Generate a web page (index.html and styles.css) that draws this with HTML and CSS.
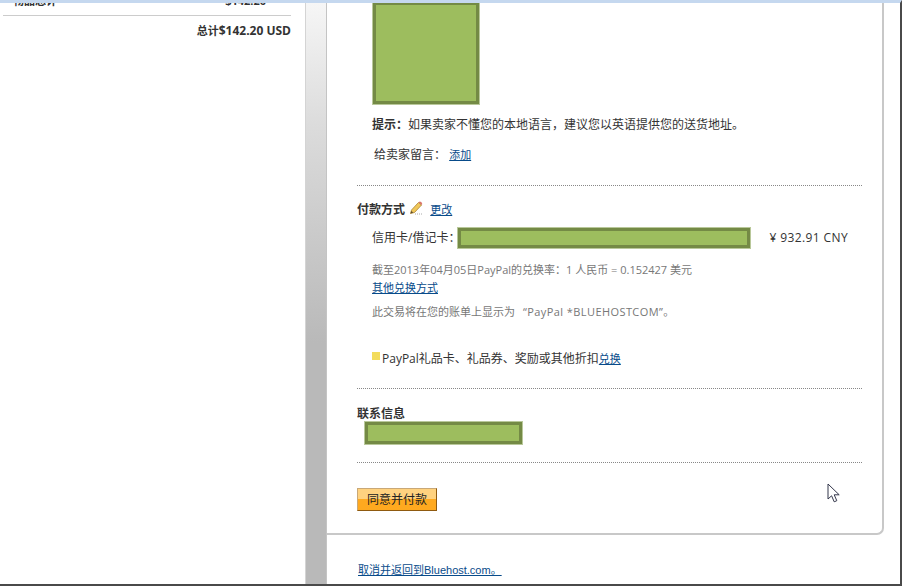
FILE: index.html
```html
<!DOCTYPE html>
<html lang="zh">
<head>
<meta charset="utf-8">
<title>PayPal</title>
<link rel="stylesheet" href="styles.css">
</head>
<body>
<div class="window">
  <aside class="summary">
    <div class="subtotal"><span>物品总计</span><span>$142.20</span></div>
    <div class="total">总计<span class="total-value">$142.20 USD</span></div>
  </aside>
  <div class="gutter"></div>
  <main class="main">
    <section class="card">
      <div class="mask mask-photo"></div>
      <p class="hint"><b>提示<span class="mid">：</span></b>如果卖家不懂您的本地语言<span class="mid">，</span>建议您以英语提供您的送货地址。</p>
      <p class="note">给卖家留言<span class="mid">：</span> <a href="#">添加</a></p>
      <hr class="rule rule-pay">
      <h2 class="heading">付款方式
        <svg class="pencil" width="14" height="14" viewBox="0 0 14 14" aria-hidden="true">
          <path d="M1.5 12.5l1-3.5 7-7.5 3 2.5-7 7.5z" fill="#f0c75a" stroke="#a9822d" stroke-width=".8"/>
          <path d="M9.5 1.5l3 2.5 .8-1-1-2-1.6-.4z" fill="#d9756a"/>
          <path d="M1.5 12.5l.8-2.6 2 1.6z" fill="#5a4a30"/>
          <path d="M6 13h8" stroke="#aaa" stroke-width="1" stroke-dasharray="1 1"/>
        </svg>
        <a class="change" href="#">更改</a></h2>
      <div class="pay-row">
        <span>信用卡/借记卡<span class="mid">：</span></span>
        <div class="mask mask-card"></div>
        <span class="amount">¥ 932.91 CNY</span>
      </div>
      <p class="small rate">截至2013年04月05日PayPal的兑换率<span class="mid">：</span>1 人民币 = 0.152427 美元</p>
      <p class="small other"><a href="#">其他兑换方式</a></p>
      <p class="small descriptor">此交易将在您的账单上显示为<span class="quoted">“PayPal *BLUEHOSTCOM”</span>。</p>
      <p class="gift"><span class="swatch"></span>PayPal礼品卡、礼品券、奖励或其他折扣<a href="#">兑换</a></p>
      <hr class="rule rule-contact">
      <h2 class="heading contact">联系信息</h2>
      <div class="mask mask-contact"></div>
      <hr class="rule rule-submit">
      <button class="submit" type="button">同意并付款</button>
    </section>
    <a class="cancel" href="#">取消并返回到Bluehost.com。</a>
  </main>
  <svg class="cursor" width="14" height="21" viewBox="0 0 14 21" aria-hidden="true">
    <path d="M1 1v15l3.6-3.2 2.6 6 2.6-1.1-2.6-5.9h5z" fill="#fff" stroke="#33364a" stroke-width="1"/>
  </svg>
</div>
</body>
</html>
```

FILE: styles.css
```css
* { box-sizing: border-box; }
html, body { margin: 0; padding: 0; background: #fff; }
body {
  width: 904px;
  height: 588px;
  overflow: hidden;
  font-family: "Open Sans", "Noto Sans CJK SC", sans-serif;
  font-size: 12px;
  color: #333;
}
a { color: #084b8a; text-decoration: underline; }
p { margin: 0; }
.mid { font-family: "Noto Sans CJK TC", sans-serif; line-height: 0; }

.window {
  position: relative;
  display: flex;
  width: 902px;
  height: 586px;
  overflow: hidden;
  border-top: 3px solid #c5d8ef;
  border-right: 2px solid #4a4a4a;
  border-bottom: 2px solid #4a4a4a;
}

.summary { width: 305px; flex: none; padding: 0 14px 0 3px; }
.subtotal {
  display: flex;
  justify-content: space-between;
  height: 12px;
  margin-top: -10px;
  padding: 0 25px 0 10px;
  font-size: 11px;
  line-height: 16px;
  font-weight: 700;
}
.total {
  margin-top: 10px;
  padding-top: 7px;
  border-top: 1px solid #ccc;
  text-align: right;
  font-size: 11px;
  line-height: 16px;
  font-weight: 700;
}
.total-value { font-size: 12px; }

.gutter {
  width: 22px;
  flex: none;
  border-left: 1px solid #d4d4d4;
  border-right: 1px solid #c4c4c4;
  background: linear-gradient(#f6f6f6 0, #dcdcdc 120px, #b9b9b9 340px, #b9b9b9 100%);
}

.main { flex: 1; min-width: 0; }
.card {
  width: 557px;
  height: 533px;
  margin-top: -1px;
  padding: 0 20px 0 30px;
  border-right: 2px solid #c8c8c8;
  border-bottom: 2px solid #c8c8c8;
  border-bottom-right-radius: 7px;
}

.mask {
  background: #9dbd5e;
  border: 3px solid #748a45;
  box-shadow: 0 0 0 1px #b9c89a;
}
.mask-photo { width: 106px; height: 102px; margin-left: 16px; }

.hint { margin: 12px 0 0 15px; line-height: 18px; }
.note { margin: 12px 0 0 17px; line-height: 18px; }

.rule { margin: 0; border: 0; border-top: 1px dotted #888; }
.rule-pay { margin-top: 21px; }
.rule-contact { margin-top: 20px; }
.rule-submit { margin-top: 18px; }

.heading { margin: 0; font-size: 12px; line-height: 18px; font-weight: 700; }
.heading a, .note a { font-weight: 400; font-size: 11px; }
.pencil { margin-left: 1px; vertical-align: -1px; }
.heading:not(.contact) { margin-top: 15px; }
.change { margin-left: 4px; }
.contact { margin-top: 16px; }

.pay-row { display: flex; align-items: center; height: 20px; margin: 9px 0 0 15px; line-height: 18px; }
.mask-card { width: 292px; height: 20px; margin-left: -2px; }
.amount { margin-left: 19px; letter-spacing: .4px; }

.small { font-size: 11px; line-height: 14px; color: #777; margin-left: 15px; }
.rate { margin-top: 15px; }
.other { margin-top: 4px; }
.descriptor { margin-top: 10px; }
.quoted { margin-left: 8px; letter-spacing: .42px; }

.gift { margin: 31px 0 0 15px; line-height: 18px; }
.gift a { font-size: 11px; }
.swatch { display: inline-block; width: 8px; height: 8px; margin: 0 2px 0 0; background: #f3dc5c; vertical-align: 3px; }

.mask-contact { width: 157px; height: 22px; margin: -1px 0 0 8px; }

.submit {
  display: block;
  width: 80px;
  height: 23px;
  margin: 25px 0 0;
  padding: 0;
  border: 1px solid #c9a877;
  border-bottom: 1px solid #8f5a10;
  border-right-color: #8f5a10;
  background: linear-gradient(#ffd27f 0, #ffd27f 50%, #ffa91f 50%, #ffa91f 100%);
  color: #222;
  font-family: inherit;
  font-size: 12px;
  line-height: 20px;
}

.cancel { display: inline-block; margin: 27px 0 0 31px; font-family: "Liberation Sans", "Noto Sans CJK SC", sans-serif; font-size: 11px; line-height: 16px; }

.cursor { position: absolute; left: 827px; top: 480px; }
```
